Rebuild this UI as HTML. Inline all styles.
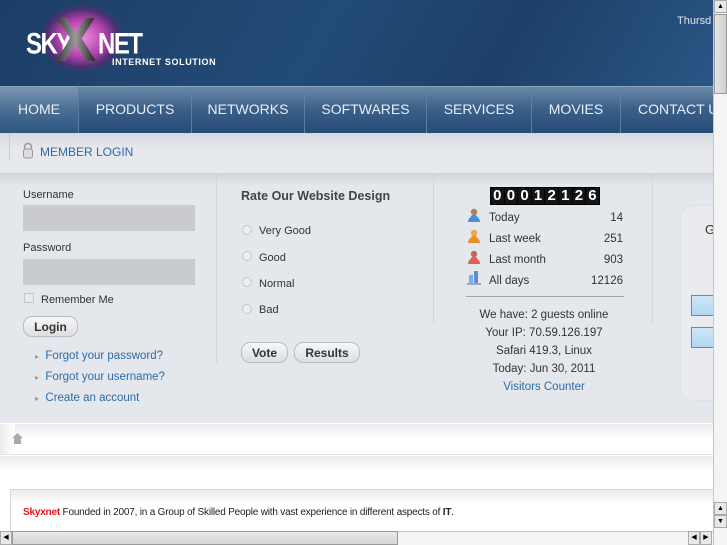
<!DOCTYPE html>
<html><head><style>
*{margin:0;padding:0;box-sizing:border-box}
body{width:727px;height:545px;overflow:hidden;font-family:"Liberation Sans",sans-serif;background:#e4e7ec;position:relative}
.a{position:absolute}
#hdr{left:0;top:0;width:713px;height:86px;background:linear-gradient(120deg,#1c3e66 0%,#234b78 45%,#1d4068 70%,#2a5585 100%)}
#nav{left:0;top:86px;width:713px;height:47px;background:linear-gradient(#6a89a9 0%,#3d6189 45%,#254c77 100%);border-top:1px solid #8aa4be}
.ni{position:absolute;top:0;height:47px;color:#e8eef5;font-size:14px;line-height:45px;border-left:1px solid #5e7f9f;text-align:center}
#ml{left:0;top:133px;width:713px;height:40px;background:linear-gradient(#d5d8dd,#e6e8ec 40%);}
.lbl{font-size:11px;color:#333}
.inp{background:#c9cbcf;width:172px;height:26px}
.lnk{color:#2f6aa8;font-size:11.5px}
.btn{border:1px solid #b9bcc1;border-radius:9px;background:linear-gradient(#f7f7f8,#dcdee1);font-size:12px;font-weight:bold;color:#333;text-align:center;line-height:20px;height:21px}
.rad{width:10px;height:10px;border:1px solid #c5c7cb;border-radius:50%;background:#eceef1}
.st{font-size:11.5px;color:#333}
.cnt{display:flex;gap:1px;background:#000;padding:1px}
.cnt span{width:12.6px;height:16px;background:#151515;color:#fff;font-weight:bold;font-size:15px;line-height:16px;text-align:center}
</style></head><body>
<div id="hdr" class="a">
 <div class="a" style="left:40px;top:4px;width:84px;height:68px;border-radius:50%;background:radial-gradient(#f090e0,#b040a8 40%,rgba(120,30,120,.5) 60%,transparent 72%)"></div>
 <div class="a" style="left:26px;top:27px;color:#fff;font-weight:bold;font-size:24px;letter-spacing:-1.5px;transform:scaleY(1.25);transform-origin:top">SKY</div>
 <div class="a" style="left:55px;top:10px;font-weight:bold;font-size:62px;line-height:62px;color:#1a1a1a;background:linear-gradient(90deg,#333,#999 50%,#222);-webkit-background-clip:text;-webkit-text-fill-color:transparent">X</div>
 <div class="a" style="left:98px;top:27px;color:#fff;font-weight:bold;font-size:24px;letter-spacing:-1.5px;transform:scaleY(1.25);transform-origin:top">NET</div>
 <div class="a" style="left:112px;top:57px;color:#fff;font-weight:bold;font-size:9px;letter-spacing:.6px">INTERNET SOLUTION</div>
 <div class="a" style="left:677px;top:15px;color:#dfe6ee;font-size:11px">Thursd</div>
</div>
<div id="nav" class="a">
 <div class="ni" style="left:0;width:78px;border-left:none;background:linear-gradient(#7a96b3,#4a6d93 50%,#2c5580)">HOME</div>
 <div class="ni" style="left:78px;width:113px">PRODUCTS</div>
 <div class="ni" style="left:191px;width:113px">NETWORKS</div>
 <div class="ni" style="left:304px;width:122px">SOFTWARES</div>
 <div class="ni" style="left:426px;width:105px">SERVICES</div>
 <div class="ni" style="left:531px;width:89px">MOVIES</div>
 <div class="ni" style="left:620px;width:100px;text-align:left;padding-left:17px">CONTACT U</div>
</div>
<div id="ml" class="a">
 <div class="a" style="left:9px;top:0;width:1px;height:28px;background:#c8cbd0"></div>
 <svg class="a" style="left:22px;top:9px" width="12" height="17"><circle cx="6" cy="5" r="3.5" fill="none" stroke="#999" stroke-width="1.5"/><rect x="1.5" y="7" width="9" height="9" rx="2" fill="#ddd" stroke="#999"/></svg>
 <div class="a lnk" style="left:40px;top:12px;font-size:12px">MEMBER LOGIN</div>
</div>
<div class="a" style="left:0;top:173px;width:713px;height:12px;background:linear-gradient(#cfd2d7,#e4e7ec)"></div>
<div class="a" style="left:216px;top:173px;width:1px;height:190px;background:#d3d6da"></div>
<div class="a" style="left:433px;top:173px;width:1px;height:150px;background:#d3d6da"></div>
<div class="a" style="left:652px;top:173px;width:1px;height:150px;background:#d3d6da"></div>
<div class="a lbl" style="left:23px;top:189px">Username</div>
<div class="a inp" style="left:23px;top:205px"></div>
<div class="a lbl" style="left:23px;top:242px">Password</div>
<div class="a inp" style="left:23px;top:259px"></div>
<div class="a" style="left:24px;top:293px;width:10px;height:10px;border:1px solid #c5c7cb;background:#e8eaed"></div>
<div class="a lbl" style="left:41px;top:294px">Remember Me</div>
<div class="a btn" style="left:23px;top:316px;width:55px">Login</div>
<div class="a lnk" style="left:35px;top:350px"><span style="color:#999;font-size:8px">▸</span>&nbsp; Forgot your password?</div>
<div class="a lnk" style="left:35px;top:371px"><span style="color:#999;font-size:8px">▸</span>&nbsp; Forgot your username?</div>
<div class="a lnk" style="left:35px;top:392px"><span style="color:#999;font-size:8px">▸</span>&nbsp; Create an account</div>
<div class="a" style="left:241px;top:189px;font-size:12.5px;font-weight:bold;color:#444">Rate Our Website Design</div>
<div class="a rad" style="left:242px;top:225px"></div><div class="a lbl" style="left:259px;top:225px">Very Good</div>
<div class="a rad" style="left:242px;top:251px"></div><div class="a lbl" style="left:259px;top:252px">Good</div>
<div class="a rad" style="left:242px;top:277px"></div><div class="a lbl" style="left:259px;top:278px">Normal</div>
<div class="a rad" style="left:242px;top:304px"></div><div class="a lbl" style="left:259px;top:304px">Bad</div>
<div class="a btn" style="left:241px;top:342px;width:47px">Vote</div>
<div class="a btn" style="left:294px;top:342px;width:66px">Results</div>
<div class="a cnt" style="left:490px;top:187px"><span>0</span><span>0</span><span>0</span><span>1</span><span>2</span><span>1</span><span>2</span><span>6</span></div>
<svg class="a" style="left:467px;top:208px" width="14" height="14"><circle cx="7" cy="4" r="3.2" fill="#b97a55"/><path d="M1 14a6 6 0 0 1 12 0z" fill="#4a8fd8"/><circle cx="7" cy="10" r="3.5" fill="#4a8fd8"/></svg>
<div class="a st" style="left:489px;top:212px">Today</div><div class="a st" style="left:603px;top:212px;width:20px;text-align:right">14</div>
<svg class="a" style="left:467px;top:229px" width="14" height="14"><circle cx="7" cy="4" r="3.2" fill="#f0a850"/><path d="M1 14a6 6 0 0 1 12 0z" fill="#e8912a"/><circle cx="7" cy="10" r="3.5" fill="#e8912a"/></svg>
<div class="a st" style="left:489px;top:233px">Last week</div><div class="a st" style="left:593px;top:233px;width:30px;text-align:right">251</div>
<svg class="a" style="left:467px;top:250px" width="14" height="14"><circle cx="7" cy="4" r="3.2" fill="#b9705a"/><path d="M1 14a6 6 0 0 1 12 0z" fill="#e0605a"/><circle cx="7" cy="10" r="3.5" fill="#e0605a"/></svg>
<div class="a st" style="left:489px;top:254px">Last month</div><div class="a st" style="left:593px;top:254px;width:30px;text-align:right">903</div>
<svg class="a" style="left:467px;top:270px" width="14" height="15"><rect x="2" y="5" width="4" height="8" fill="#7aaee0"/><rect x="7" y="1" width="4" height="12" fill="#5a90d0"/><rect x="0" y="13" width="14" height="2" fill="#9ab"/></svg>
<div class="a st" style="left:489px;top:275px">All days</div><div class="a st" style="left:583px;top:275px;width:40px;text-align:right">12126</div>
<div class="a" style="left:466px;top:296px;width:158px;height:1px;background:#a0a3a8"></div>
<div class="a st" style="left:434px;top:306px;width:220px;text-align:center;line-height:18px">We have: 2 guests online<br>Your IP: 70.59.126.197<br>Safari 419.3, Linux<br>Today: Jun 30, 2011<br><span style="color:#2f6aa8">Visitors Counter</span></div>
<div class="a" style="left:680px;top:205px;width:60px;height:196px;border-radius:14px;background:#e9ebee;border:1px solid #dfe1e4"></div>
<div class="a" style="left:705px;top:222px;font-size:13px;color:#333">G</div>
<div class="a" style="left:691px;top:295px;width:30px;height:21px;border:1px solid #5d8cc4;background:linear-gradient(#cfe6f6,#b2d5ee)"></div>
<div class="a" style="left:691px;top:327px;width:30px;height:21px;border:1px solid #5d8cc4;background:linear-gradient(#cfe6f6,#b2d5ee)"></div>
<div class="a" style="left:0;top:423px;width:713px;height:108px;background:#fff"></div>
<div class="a" style="left:0;top:424px;width:713px;height:14px;background:linear-gradient(#ececee,#fff)"></div>
<div class="a" style="left:0;top:424px;width:15px;height:30px;background:linear-gradient(90deg,#ececee,#fff)"></div>
<svg class="a" style="left:12px;top:433px" width="11" height="11"><path d="M5.5 0L11 5H9v6H2V5H0z" fill="#aaa"/></svg>
<div class="a" style="left:0;top:454px;width:713px;height:1px;background:#e2e3e5"></div>
<div class="a" style="left:0;top:456px;width:713px;height:14px;background:linear-gradient(#ececee,#fff)"></div>
<div class="a" style="left:10px;top:489px;width:703px;height:42px;border-left:1px solid #d6d7da;border-top:1px solid #d6d7da;background:linear-gradient(#ececee,#fff 35%)"></div>
<div class="a" style="left:23px;top:507px;font-size:10px;color:#222;letter-spacing:-.2px"><b style="color:#e11">Skyxnet</b> Founded in 2007, in a Group of Skilled People with vast experience in different aspects of <b>IT</b>.</div>
<div class="a" style="left:713px;top:0;width:14px;height:545px;background:#f4f4f4;border-left:1px solid #c5c5c5"></div>
<div class="a" style="left:714px;top:0;width:13px;height:13px;background:#e8e8e8;border:1px solid #aaa;font-size:7px;text-align:center;line-height:11px">▲</div>
<div class="a" style="left:714px;top:14px;width:13px;height:80px;background:linear-gradient(90deg,#e4e4e4,#cfd0d2);border:1px solid #9a9a9a"></div>
<div class="a" style="left:714px;top:502px;width:13px;height:13px;background:#e8e8e8;border:1px solid #aaa;font-size:7px;text-align:center;line-height:11px">▲</div>
<div class="a" style="left:714px;top:515px;width:13px;height:13px;background:#e8e8e8;border:1px solid #aaa;font-size:7px;text-align:center;line-height:11px">▼</div>
<div class="a" style="left:0;top:531px;width:713px;height:14px;background:#f4f4f4;border-top:1px solid #c5c5c5"></div>
<div class="a" style="left:0;top:531px;width:12px;height:14px;background:#e8e8e8;border:1px solid #aaa;font-size:7px;text-align:center;line-height:12px">◀</div>
<div class="a" style="left:12px;top:531px;width:386px;height:14px;background:linear-gradient(#e8e8e8,#d4d5d7);border:1px solid #9a9a9a"></div>
<div class="a" style="left:688px;top:531px;width:12px;height:14px;background:#e8e8e8;border:1px solid #aaa;font-size:7px;text-align:center;line-height:12px">◀</div>
<div class="a" style="left:700px;top:531px;width:12px;height:14px;background:#e8e8e8;border:1px solid #aaa;font-size:7px;text-align:center;line-height:12px">▶</div>
</body></html>
